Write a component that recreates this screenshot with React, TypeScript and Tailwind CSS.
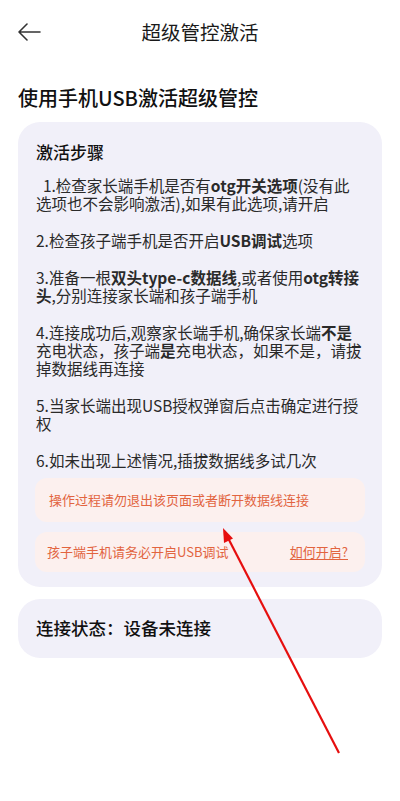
import React from 'react';

const steps: React.ReactNode[] = [
  <>
    {'\u00a0\u00a01.检查家长端手机是否有'}
    <b className="font-bold">otg开关选项</b>
    (没有此选项也不会影响激活),如果有此选项,请开启
  </>,
  <>
    2.检查孩子端手机是否开启<b className="font-bold">USB调试</b>选项
  </>,
  <>
    3.准备一根<b className="font-bold">双头type-c数据线</b>,或者使用
    <b className="font-bold">otg转接头</b>,分别连接家长端和孩子端手机
  </>,
  <>
    4.连接成功后,观察家长端手机,确保家长端<b className="font-bold">不是</b>
    充电状态，孩子端<b className="font-bold">是</b>充电状态，如果不是，请拔掉数据线再连接
  </>,
  <>5.当家长端出现USB授权弹窗后点击确定进行授权</>,
  <>6.如未出现上述情况,插拔数据线多试几次</>,
];

const BackArrow = () => (
  <svg width="24" height="18" viewBox="0 0 24 18" fill="none">
    <path
      d="M23 9H2M10 1L2 9l8 8"
      stroke="#333"
      strokeWidth="1.6"
      strokeLinecap="round"
      strokeLinejoin="round"
    />
  </svg>
);

export default function App() {
  return (
    <div
      className="relative w-[400px] h-[801px] bg-white text-[#222] overflow-hidden"
      style={{ fontFamily: '"Noto Sans CJK SC", "Noto Sans", sans-serif' }}
    >
      {/* top bar */}
      <div className="relative flex items-center h-[64px] px-[17px]">
        <BackArrow />
        <div className="absolute inset-x-0 top-0 h-[64px] flex items-center justify-center text-[19.5px] text-[#1a1a1a] pointer-events-none">
          超级管控激活
        </div>
      </div>

      <div className="px-[18px]">
        <h1 className="mt-[22px] text-[20px] leading-[24px] font-medium text-[#111]">
          使用手机USB激活超级管控
        </h1>

        <div className="mt-[12px] rounded-[22px] bg-[#f1f0f9] pt-[20px] pb-[15px] px-[17px]">
          <div className="px-px text-[17px] leading-[20px] font-medium text-[#111]">激活步骤</div>
          <div className="mt-[14px] px-px flex flex-col gap-[19px] text-[15.5px] leading-[18px] text-[#2a2a2a]">
            {steps.map((s, i) => (
              <p key={i}>{s}</p>
            ))}
          </div>

          <div className="mt-[9px] flex flex-col gap-[10px]">
            <div className="h-[44px] rounded-[12px] bg-[#fcf0ee] flex items-center px-[14px] text-[13px] text-[#e2643f]">
              操作过程请勿退出该页面或者断开数据线连接
            </div>
            <div className="h-[40px] rounded-[12px] bg-[#fcf0ee] flex items-center justify-between pl-[12px] pr-[17px] text-[13px] text-[#e2643f]">
              <span>孩子端手机请务必开启USB调试</span>
              <span className="underline underline-offset-2">如何开启?</span>
            </div>
          </div>
        </div>

        <div className="mt-[12px] h-[59px] rounded-[22px] bg-[#f1f0f9] flex items-center px-[18px] text-[17.5px] font-medium text-[#111]">
          连接状态：设备未连接
        </div>
      </div>

      {/* annotation arrow */}
      <svg
        className="absolute inset-0 pointer-events-none"
        width="400"
        height="801"
        viewBox="0 0 400 801"
      >
        <line x1="339" y1="753" x2="227" y2="536" stroke="#e60f0f" strokeWidth="2.2" />
        <polygon points="223,528 224,543 233,538.5" fill="#e60f0f" />
      </svg>
    </div>
  );
}
